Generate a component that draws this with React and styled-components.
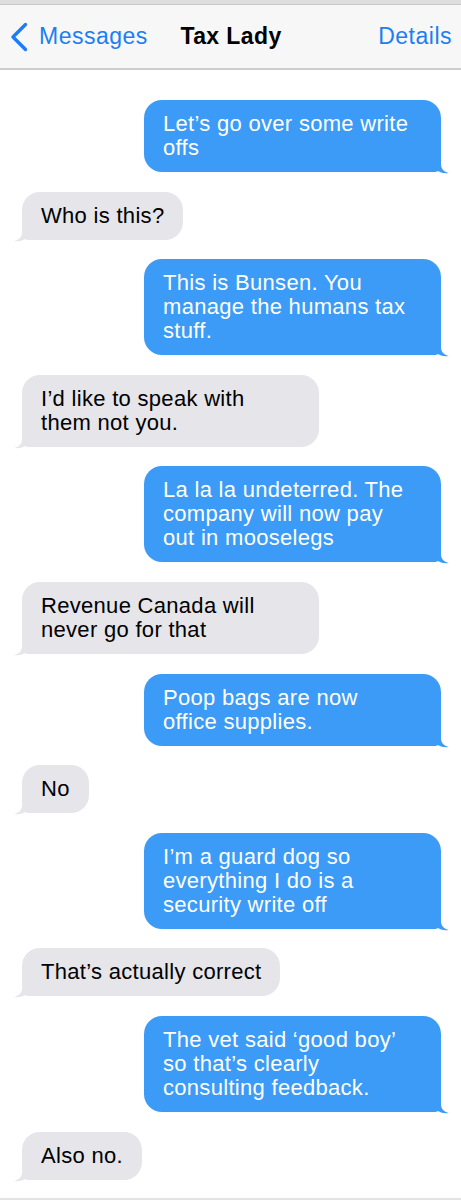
import React from 'react'
import styled, { createGlobalStyle } from 'styled-components'

const GlobalStyle = createGlobalStyle`
    html, body {
        margin: 0;
        padding: 0;
        background: #fff;
    }
    body {
        font-family: "Liberation Sans", Arial, Helvetica, sans-serif;
    }
`

const Screen = styled.div`
    width: 461px;
    height: 1200px;
    overflow: hidden;
    display: flex;
    flex-direction: column;
    background: #fff;
    border-bottom: 2px solid #e2e2e2;
    box-sizing: border-box;
`

const StatusStrip = styled.div`
    height: 4px;
    background: #dedede;
    border-bottom: 1px solid #c9c9c9;
`

const NavBar = styled.header`
    height: 63px;
    display: grid;
    grid-template-columns: 1fr auto 1fr;
    align-items: center;
    background: #f7f7f8;
    border-bottom: 2px solid #cdcdcf;
    padding: 0 9px 0 10px;
`

const BackLink = styled.a`
    display: flex;
    align-items: center;
    gap: 11px;
    color: #1d7ef3;
    font-size: 23px;
    letter-spacing: 0.5px;
    text-decoration: none;
    justify-self: start;
`

const Title = styled.h1`
    margin: 0;
    font-size: 23px;
    font-weight: 700;
    letter-spacing: 0.4px;
    color: #000;
`

const Action = styled.a`
    justify-self: end;
    color: #1d7ef3;
    font-size: 23px;
    letter-spacing: 0.5px;
    text-decoration: none;
`

const Thread = styled.main`
    display: flex;
    flex-direction: column;
    gap: 19.6px;
    padding: 30px 20px 0 22px;
`

const Bubble = styled.div`
    position: relative;
    align-self: ${p => (p.$mine ? 'flex-end' : 'flex-start')};
    width: ${p => (p.$wide ? '297px' : 'auto')};
    box-sizing: border-box;
    padding: 12px 19px;
    border-radius: 18px;
    ${p => (p.$mine ? 'border-bottom-right-radius: 6px;' : 'border-bottom-left-radius: 6px;')}
    background: ${p => (p.$mine ? '#3b9bf6' : '#e5e5ea')};
    color: ${p => (p.$mine ? '#fff' : '#000')};
    font-size: 22px;
    line-height: 24px;
    letter-spacing: 0.3px;
`

const Line = styled.span`
    display: block;
    white-space: nowrap;
`

const Tail = styled.svg`
    position: absolute;
    bottom: -2px;
    width: 20px;
    height: 20px;
    ${p => (p.$mine ? 'right: -8px;' : 'left: -8px; transform: scaleX(-1);')}
`

const messages = [
    { mine: true, lines: ['Let’s go over some write', 'offs'] },
    { mine: false, lines: ['Who is this?'] },
    { mine: true, lines: ['This is Bunsen. You', 'manage the humans tax', 'stuff.'] },
    { mine: false, lines: ['I’d like to speak with', 'them not you.'] },
    { mine: true, lines: ['La la la undeterred. The', 'company will now pay', 'out in mooselegs'] },
    { mine: false, lines: ['Revenue Canada will', 'never go for that'] },
    { mine: true, lines: ['Poop bags are now', 'office supplies.'] },
    { mine: false, lines: ['No'] },
    { mine: true, lines: ['I’m a guard dog so', 'everything I do is a', 'security write off'] },
    { mine: false, lines: ['That’s actually correct'] },
    { mine: true, lines: ['The vet said ‘good boy’', 'so that’s clearly', 'consulting feedback.'] },
    { mine: false, lines: ['Also no.'] },
]

function Chevron() {
    return (
        <svg width="18" height="30" viewBox="0 0 18 30">
            <polyline points="15.5,2.5 3,15 15.5,27.5" fill="none" stroke="#1d7ef3" strokeWidth="3.4" strokeLinecap="round" strokeLinejoin="round" />
        </svg>
    )
}

function Message({ mine, lines }) {
    return (
        <Bubble $mine={mine} $wide={lines.length > 1}>
            {lines.map((l, i) => <Line key={i}>{l}</Line>)}
            <Tail $mine={mine} viewBox="0 0 20 20">
                <path
                    d="M0 0 H12 V10 C12 14 14 17.5 19.5 19 C15 19.6 11 18.6 8 16.6 C6 17.6 3 18 0 18 Z"
                    fill={mine ? '#3b9bf6' : '#e5e5ea'}
                />
            </Tail>
        </Bubble>
    )
}

export default function App() {
    return (
        <Screen>
            <GlobalStyle />
            <StatusStrip />
            <NavBar>
                <BackLink href="#"><Chevron />Messages</BackLink>
                <Title>Tax Lady</Title>
                <Action href="#">Details</Action>
            </NavBar>
            <Thread>
                {messages.map((m, i) => <Message key={i} {...m} />)}
            </Thread>
        </Screen>
    )
}
